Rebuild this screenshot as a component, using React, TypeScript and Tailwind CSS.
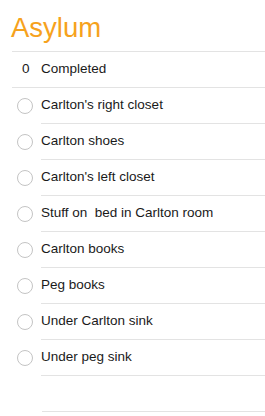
export default function App() {
  const items = [
    "Carlton's right closet",
    "Carlton shoes",
    "Carlton's left closet",
    "Stuff on  bed in Carlton room",
    "Carlton books",
    "Peg books",
    "Under Carlton sink",
    "Under peg sink",
  ];
  return (
    <div className="w-[265px] h-[416px] bg-white overflow-hidden" style={{ fontFamily: '"Liberation Sans", Arial, sans-serif' }}>
      <div className="h-[51px] pl-[12px] relative">
        <div className="absolute left-[11px] top-[13px] text-[27.5px] leading-[30px] text-[#f6a21d]">Asylum</div>
      </div>
      <div className="ml-[12px] border-t border-b border-[#e3e3e3] h-[37px] flex items-center text-[13.5px] text-[#1a1a1a]">
        <span className="w-[29px] pl-[10px]">0</span>
        <span>Completed</span>
      </div>
      {items.map((t) => (
        <div key={t} className="flex h-[36px]">
          <div className="w-[42px] flex items-center">
            <div className="ml-[17px] w-[16px] h-[16px] rounded-full border border-[#c4c4c4]" />
          </div>
          <div className="flex-1 border-b border-[#e3e3e3] flex items-center text-[13.5px] text-[#1a1a1a] -ml-[1px] whitespace-pre">
            {t}
          </div>
        </div>
      ))}
      <div className="flex h-[36px]">
        <div className="w-[42px]" />
        <div className="flex-1 border-b border-[#e3e3e3]" />
      </div>
    </div>
  );
}
